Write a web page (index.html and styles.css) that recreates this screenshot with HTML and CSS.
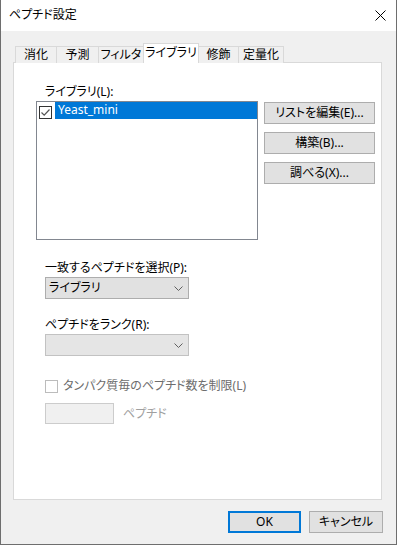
FILE: index.html
```html
<!DOCTYPE html>
<html lang="ja">
<head>
  <meta charset="UTF-8" />
  <title>ペプチド設定</title>
  <link rel="stylesheet" href="styles.css">
</head>
<body>
  <div class="window">
    <div class="titlebar">
      <span class="title">ペプチド設定</span>
      <svg class="close" width="11" height="11" viewBox="0 0 11 11">
        <path d="M0.5 0.5 L10.5 10.5 M10.5 0.5 L0.5 10.5" stroke="#000" stroke-width="1" fill="none"/>
      </svg>
    </div>

    <div class="client">
      <div class="tabs">
        <div class="tab t1">消化</div>
        <div class="tab t2">予測</div>
        <div class="tab t3">フィルタ</div>
        <div class="tab t4 active">ライブラリ</div>
        <div class="tab t5">修飾</div>
        <div class="tab t6">定量化</div>
      </div>

      <div class="panel">
        <div class="label">ライブラリ(L):</div>
        <div class="lib-row">
          <div class="listbox">
            <div class="item">
              <span class="check">
                <svg width="11" height="11" viewBox="0 0 11 11">
                  <path d="M1.5 5.5 L4.2 8.2 L9.5 2.5" stroke="#555" stroke-width="1.2" fill="none"/>
                </svg>
              </span>
              <span class="item-text">Yeast_mini</span>
            </div>
          </div>
          <div class="side-buttons">
            <button class="btn">リストを編集(E)...</button>
            <button class="btn">構築(B)...</button>
            <button class="btn">調べる(X)...</button>
          </div>
        </div>

        <div class="label gap-top">一致するペプチドを選択(P):</div>
        <div class="combo">
          <span>ライブラリ</span>
          <svg class="chev" width="9" height="5" viewBox="0 0 9 5">
            <path d="M0.5 0.5 L4.5 4.5 L8.5 0.5" stroke="#606060" stroke-width="1" fill="none"/>
          </svg>
        </div>

        <div class="label gap-top2">ペプチドをランク(R):</div>
        <div class="combo disabled">
          <span></span>
          <svg class="chev" width="9" height="5" viewBox="0 0 9 5">
            <path d="M0.5 0.5 L4.5 4.5 L8.5 0.5" stroke="#606060" stroke-width="1" fill="none"/>
          </svg>
        </div>

        <div class="check-row">
          <span class="dis-box"></span>
          <span class="dis-text">タンパク質毎のペプチド数を制限(L)</span>
        </div>

        <div class="input-row">
          <span class="dis-input"></span>
          <span class="unit">ペプチド</span>
        </div>
      </div>

      <div class="footer">
        <button class="btn ok">OK</button>
        <button class="btn cancel">キャンセル</button>
      </div>
    </div>
  </div>
</body>
</html>
```

FILE: styles.css
```css
* {
  box-sizing: border-box;
  margin: 0;
  padding: 0;
}

body {
  background: #f0f0f0;
  font-family: "Noto Sans", "Noto Sans CJK JP", sans-serif;
  font-size: 12px;
  font-feature-settings: "palt";
  color: #000;
}

.window {
  width: 397px;
  height: 545px;
  border: 1px solid #6e6e6e;
  border-top: none;
  background: #f0f0f0;
  display: flex;
  flex-direction: column;
}

.titlebar {
  height: 31px;
  background: #fff;
  display: flex;
  align-items: center;
  justify-content: space-between;
  padding: 0 10px 0 8px;
}

.title {
  line-height: 16px;
  padding-bottom: 1px;
}

.close {
  margin-bottom: 1px;
}

.client {
  padding: 12px 14px 0 12px;
  flex: 1;
}

/* tabs */
.tabs {
  display: flex;
  align-items: flex-end;
  height: 20px;
  padding-left: 2px;
  margin-bottom: -1px;
  position: relative;
  z-index: 1;
}

.tab {
  height: 17px;
  line-height: 16px;
  text-align: center;
  background: #f0f0f0;
  border: 1px solid #d9d9d9;
  border-bottom: none;
  margin-left: -1px;
}

.tab:first-child { margin-left: 0; }

.t1 { width: 42px; }
.t2 { width: 43px; }
.t3 { width: 46px; }
.t4 { width: 56px; }
.t5 { width: 41px; }
.t6 { width: 46px; }

.tab.active {
  height: 20px;
  line-height: 18px;
  background: #fff;
  position: relative;
  z-index: 2;
}

.panel {
  height: 438px;
  background: #fff;
  border: 1px solid #d9d9d9;
  padding: 21px 0 0 31px;
}

.label {
  line-height: 16px;
  margin-bottom: 1px;
}

.gap-top { margin-top: 20px; }
.gap-top2 { margin-top: 18px; }

.lib-row {
  display: flex;
  margin-left: -9px;
  gap: 6px;
}

.listbox {
  width: 222px;
  height: 139px;
  border: 1px solid #828790;
  background: #fff;
}

.item {
  display: flex;
  align-items: center;
  height: 17px;
}

.check {
  width: 13px;
  height: 13px;
  border: 1px solid #333;
  margin: 3px 3px 0 2px;
  display: flex;
  align-items: center;
  justify-content: center;
  background: #fff;
}

.item-text {
  flex: 1;
  height: 17px;
  line-height: 16px;
  background: #0078d7;
  color: #fff;
  padding-left: 3px;
}

.side-buttons {
  display: flex;
  flex-direction: column;
  gap: 8px;
  padding-top: 1px;
}

.btn {
  font: inherit;
  font-feature-settings: "palt";
  width: 111px;
  height: 22px;
  line-height: 18px;
  background: #e1e1e1;
  border: 1px solid #adadad;
  color: #000;
}

.combo {
  width: 144px;
  height: 22px;
  background: #e1e1e1;
  border: 1px solid #adadad;
  display: flex;
  align-items: center;
  justify-content: space-between;
  padding: 0 5px 0 3px;
  line-height: 16px;
}

.combo.disabled {
  background: #e5e5e5;
  border-color: #c2c2c2;
}

.check-row {
  display: flex;
  align-items: center;
  margin-top: 22px;
  height: 16px;
}

.dis-box {
  width: 13px;
  height: 13px;
  border: 1px solid #bcbcbc;
  background: #fff;
  margin-right: 5px;
}

.dis-text {
  color: #6d6d6d;
  line-height: 16px;
}

.input-row {
  display: flex;
  align-items: center;
  margin-top: 9px;
}

.dis-input {
  width: 69px;
  height: 21px;
  border: 1px solid #cccccc;
  background: #f0f0f0;
  margin-right: 9px;
}

.unit {
  color: #a0a0a0;
  line-height: 16px;
}

.footer {
  display: flex;
  justify-content: flex-end;
  gap: 8px;
  padding-top: 11px;
  margin-right: -1px;
}

.ok {
  width: 73px;
  border: 2px solid #0078d7;
}

.cancel {
  width: 74px;
}
```
